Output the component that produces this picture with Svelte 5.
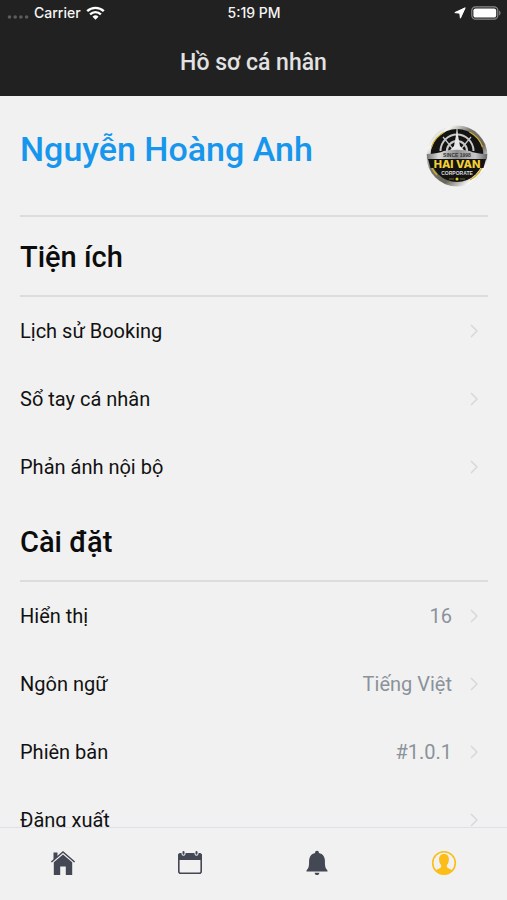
<script>
	const utilities = [
		{ label: "Lịch sử Booking" },
		{ label: "Sổ tay cá nhân" },
		{ label: "Phản ánh nội bộ" }
	];

	const settings = [
		{ label: "Hiển thị", value: "16" },
		{ label: "Ngôn ngữ", value: "Tiếng Việt" },
		{ label: "Phiên bản", value: "#1.0.1" },
		{ label: "Đăng xuất" }
	];

	const tabs = [
		{ id: "home", label: "Trang chủ" },
		{ id: "calendar", label: "Lịch" },
		{ id: "alerts", label: "Thông báo" },
		{ id: "profile", label: "Hồ sơ cá nhân" }
	];

	let active = $state("profile");
</script>

{#snippet rows(items)}
	<ul class="rows">
		{#each items as item}
			<li>
				<button class="row" type="button">
					<span class="label">{item.label}</span>
					{#if item.value}<span class="value">{item.value}</span>{/if}
					<svg class="chevron" viewBox="0 0 8 14" aria-hidden="true">
						<path d="M1 1l6 6-6 6" />
					</svg>
				</button>
			</li>
		{/each}
	</ul>
{/snippet}

<div class="screen">
	<header>
		<div class="status">
			<div class="carrier">
				<svg class="signal" viewBox="0 0 22 4" aria-hidden="true">
					<circle cx="2.5" cy="2" r="1.8" />
					<circle cx="8.2" cy="2" r="1.8" />
					<circle cx="13.9" cy="2" r="1.8" />
					<circle cx="19.6" cy="2" r="1.8" />
				</svg>
				<span>Carrier</span>
				<svg class="wifi" viewBox="0 0 19 14" aria-hidden="true">
					<path d="M1.2 5.2a12 12 0 0 1 16.6 0" />
					<path d="M4.1 8.3a7.8 7.8 0 0 1 10.8 0" />
					<path class="dot" d="M9.5 13.8l-3-3.1a4.3 4.3 0 0 1 6 0z" />
				</svg>
			</div>
			<span>5:19 PM</span>
			<div class="power">
				<svg class="arrow" viewBox="0 0 12 12" aria-hidden="true">
					<path d="M11.2.8L.8 5.6l5 .6.6 5z" />
				</svg>
				<svg class="battery" viewBox="0 0 30 14" aria-hidden="true">
					<rect class="case" x=".8" y=".8" width="26" height="12.4" rx="3.6" />
					<rect class="charge" x="2.4" y="2.4" width="22.8" height="9.2" rx="2.2" />
					<path class="cap" d="M28.2 4.6c1.8.7 1.8 4.1 0 4.8z" />
				</svg>
			</div>
		</div>
		<h1>Hồ sơ cá nhân</h1>
	</header>

	<main>
		<section class="person">
			<h2>Nguyễn Hoàng Anh</h2>
			<svg class="logo" viewBox="0 0 62 62" role="img" aria-label="Hai Van Corporate">
				<defs>
					<linearGradient id="rim" x1="0" y1="0" x2="1" y2="1">
						<stop offset="0" stop-color="#8d8d88" />
						<stop offset=".2" stop-color="#f6f6f4" />
						<stop offset=".4" stop-color="#77756c" />
						<stop offset=".62" stop-color="#6a675c" />
						<stop offset=".82" stop-color="#fafafa" />
						<stop offset="1" stop-color="#8a8a8a" />
					</linearGradient>
					<linearGradient id="band" x1="0" y1="0" x2="1" y2="0">
						<stop offset="0" stop-color="#777" />
						<stop offset=".2" stop-color="#dcdcdc" />
						<stop offset=".5" stop-color="#8f8f8f" />
						<stop offset=".8" stop-color="#c9c9c9" />
						<stop offset="1" stop-color="#666" />
					</linearGradient>
				</defs>
				<circle cx="31" cy="31" r="30.5" fill="url(#rim)" />
				<circle cx="31" cy="30.5" r="26.5" fill="#131311" />
				<path d="M5.5 22a27 27 0 0 1 13-15M43.5 7a27 27 0 0 1 13 15M58 37a28 28 0 0 1-14 18M4 37a28 28 0 0 0 7 13" fill="none" stroke="#d1ae2d" stroke-width="1.3" />
				<g fill="none" stroke="#c9c9c9">
					<path d="M14.5 26a16.5 16.5 0 0 1 33 0" stroke-width="2" />
					<path d="M21 26a10 10 0 0 1 20 0" stroke-width="2.2" />
					<path d="M31 4v22M17 12l10 12M45 12L35 24" stroke-width="1.2" />
				</g>
				<path d="M31 5l3 16 6 6H22l6-6z" fill="#e8e8e8" />
				<path d="M.8 29q12-.5 17-3 13-2.5 26 0 5 2.5 17.4 3l-.4 5.5H1.2z" fill="url(#band)" />
				<text class="since" x="31" y="32" text-anchor="middle">SINCE 1998</text>
				<path d="M2 34h58l-2.500 9h-53z" fill="#131311" />
				<text class="brand" x="31" y="43" text-anchor="middle">HAI VAN</text>
				<text class="corporate" x="31" y="50" text-anchor="middle">CORPORATE</text>
				<path d="M23 54h5M34 54h5" stroke="#6f643a" />
				<circle cx="31" cy="54" r="1.5" fill="#e9c833" />
			</svg>
		</section>

		<section>
			<h2 class="title">Tiện ích</h2>
			{@render rows(utilities)}
		</section>

		<section>
			<h2 class="title">Cài đặt</h2>
			{@render rows(settings)}
		</section>
	</main>

	<nav>
		{#each tabs as tab}
			<button
				type="button"
				class="tab"
				class:active={active === tab.id}
				aria-label={tab.label}
				onclick={() => (active = tab.id)}
			>
				<svg viewBox="0 0 26 26" aria-hidden="true">
					{#if tab.id === "home"}
						<path d="M3.5 2.5h4v4l-4 3.6z" />
						<path class="roof" d="M1.4 12L13 2l11.6 10" />
						<path d="M3.8 12.3L13 4.4l9.2 7.9V25h-6.4v-8.500h-5.600V25H3.800z" />
					{:else if tab.id === "calendar"}
						<rect class="outline" x="1.8" y="4" width="22.4" height="19.2" rx="2" />
						<path d="M1 10V5.5A2.5 2.5 0 0 1 3.5 3h19A2.5 2.5 0 0 1 25 5.5V10z" />
						<path class="ring" d="M6.5 2v1.7M19.5 2v1.7" />
						<path class="pin" d="M6.5 2v1.7M19.5 2v1.7" />
					{:else if tab.id === "alerts"}
						<path d="M13 .8c1.3 0 2 .9 1.9 2.2 4 .8 6 4 6 8 0 5.8.5 7.2 2.6 9.4v1.2h-21v-1.2c2.1-2.2 2.6-3.6 2.6-9.4 0-4 2-7.2 6-8C11 1.7 11.7.8 13 .8z" />
						<path d="M10.6 22.7h4.8c-.2 1.5-1.1 2.3-2.4 2.3s-2.2-.8-2.4-2.3z" />
					{:else}
						<circle class="outline" cx="13" cy="13" r="11.3" />
						<path d="M13 4c3.3 0 5 2.2 4.9 5.5-.1 2.5-.8 4.2-2 5.5-.3 1.9.2 3 1.8 3.6 1.8.7 3 1.3 3.8 2.2A11.5 11.5 0 0 1 13 24.4a11.5 11.5 0 0 1-8.5-3.6c.8-.9 2-1.5 3.8-2.2 1.600-.6 2.100-1.700 1.800-3.600-1.200-1.300-1.900-3-2-5.500C8 6.200 9.700 4 13 4z" />
					{/if}
				</svg>
			</button>
		{/each}
	</nav>
</div>

<style>
	:global(body) {
		margin: 0;
		background: #f1f1f1;
	}

	.screen {
		display: flex;
		flex-direction: column;
		height: 100vh;
		background: #f1f1f1;
		color: #111;
		font-family: Roboto, "Liberation Sans", sans-serif;
	}

	h1,
	h2,
	ul { margin: 0; padding: 0; }

	button {
		border: 0;
		background: none;
		color: inherit;
		font: inherit;
		cursor: pointer;
	}

	header {
		flex: none;
		padding-bottom: 16px;
		background: #212121;
		color: #e2e2e2;
	}

	.status {
		display: grid;
		grid-template-columns: 1fr auto 1fr;
		align-items: center;
		height: 25px;
		padding: 0 6px 0 7px;
		color: #f5f5f5;
		font-family: Inter, sans-serif;
		font-size: 14px;
		font-weight: 500;
	}

	.carrier,
	.power {
		display: flex;
		align-items: center;
		gap: 5px;
	}

	.power { justify-content: flex-end; }

	.signal {
		width: 22px;
		height: 4px;
		margin-top: 8px;
		fill: #5c5c5c;
	}

	.wifi {
		width: 19px;
		height: 14px;
		fill: none;
		stroke: #fff;
		stroke-width: 2.4;
	}

	.wifi .dot { fill: #fff; stroke: none; }

	.arrow {
		width: 12px;
		height: 12px;
		fill: #fff;
		stroke: #fff;
		stroke-linejoin: round;
	}

	.battery {
		width: 30px;
		height: 14px;
	}

	.case { fill: none; stroke: #8a8a8a; stroke-width: 1.2; }
	.charge { fill: #fff; }
	.cap { fill: #8a8a8a; }

	h1 {
		padding-top: 21px;
		font-size: 23px;
		font-weight: 500;
		line-height: 34px;
		text-align: center;
	}

	main {
		flex: 1;
		min-height: 0;
		padding: 0 19px 0 20px;
		overflow-y: auto;
		scrollbar-width: none;
	}

	.person {
		display: flex;
		align-items: center;
		justify-content: space-between;
		height: 119px;
		border-bottom: 2px solid #dcdcdc;
	}

	.person h2 {
		padding-bottom: 14px;
		color: #1696ec;
		font-size: 34px;
		font-weight: 500;
		line-height: 40px;
	}

	.logo {
		width: 62px;
		height: 62px;
	}

	.logo text { font-family: "Liberation Sans", sans-serif; font-weight: 700; }
	.since { fill: #333; font-size: 5px; }
	.logo .brand { fill: #f2cf35; font-family: Inter, sans-serif; font-size: 11px; font-weight: 800; }
	.corporate { fill: #ddd; font-size: 5px; }

	.title {
		padding: 20px 0 18px;
		border-bottom: 2px solid #dcdcdc;
		color: #0c0c0c;
		font-size: 29px;
		font-weight: 500;
		line-height: 40px;
	}

	.rows {
		padding-bottom: 1px;
		list-style: none;
	}

	.row {
		display: flex;
		align-items: center;
		width: 100%;
		height: 68px;
		padding: 0 10px 0 0;
		font-size: 20px;
		line-height: 28px;
		text-align: left;
	}

	.label { flex: 1; }
	.value { color: #8b929b; }

	.chevron {
		width: 8px;
		height: 14px;
		margin-left: 18px;
		fill: none;
		stroke: #d6d8da;
		stroke-width: 1.5;
	}

	nav {
		display: flex;
		flex: none;
		height: 72px;
		border-top: 1px solid #dde0e6;
	}

	.tab {
		display: grid;
		flex: 1;
		place-items: center;
		padding: 0 0 2px;
		color: #444754;
	}

	.tab.active { color: #fbbd16; }

	.tab svg {
		width: 26px;
		height: 26px;
		fill: currentColor;
	}

	.tab .outline { fill: none; stroke: currentColor; stroke-width: 1.6; }
	.tab .roof { fill: none; stroke: currentColor; stroke-width: 1.5; }
	.tab .ring { stroke: #f1f1f1; stroke-width: 4; stroke-linecap: round; }
	.tab .pin { stroke: currentColor; stroke-width: 2; stroke-linecap: round; }
</style>
